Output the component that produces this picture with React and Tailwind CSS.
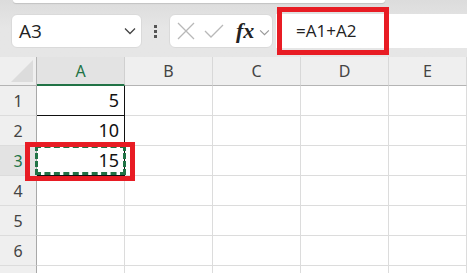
import React from 'react';

const cols = ['A', 'B', 'C', 'D', 'E'];
const rows = [1, 2, 3, 4, 5, 6, 7];
const values = { 1: '5', 2: '10', 3: '15' };

function Chevron({ className }) {
  return (
    <svg className={className} viewBox="0 0 12 8" fill="none">
      <path d="M1 1.5 6 6.5 11 1.5" stroke="currentColor" strokeWidth="1.3" />
    </svg>
  );
}

function Toolbar() {
  return (
    <div className="relative h-[57px] bg-gradient-to-b from-[#dcdcdc] via-[#e6e6e6] to-[#e6e6e6]">
      <div className="ml-[13px] h-[3px] w-[372px] rounded-b-md bg-white shadow-[0_1px_1px_rgba(0,0,0,0.12)]" />
      <div className="mt-[11px] flex h-[34px] items-stretch">
        <div className="ml-[11px] flex w-[131px] items-center justify-between rounded-md border border-[#dadada] bg-white pl-[7px] pr-[5px]">
          <span className="text-[19px] text-[#222] [font-family:'Open_Sans',sans-serif]">A3</span>
          <Chevron className="h-[8px] w-[12px] text-[#444]" />
        </div>
        <div className="flex w-[27px] flex-col items-center justify-center gap-[2px]">
          <span className="h-[3px] w-[3px] bg-[#555]" />
          <span className="h-[3px] w-[3px] bg-[#555]" />
          <span className="h-[3px] w-[3px] bg-[#555]" />
        </div>
        <div className="flex w-[104px] items-center rounded-md border border-[#dadada] bg-white pl-[7px]">
          <svg className="h-[18px] w-[18px]" viewBox="0 0 18 18" fill="none">
            <path d="M1 1 17 17M17 1 1 17" stroke="#b8b8b8" strokeWidth="1.3" />
          </svg>
          <svg className="ml-[9px] h-[16px] w-[20px]" viewBox="0 0 20 16" fill="none">
            <path d="M1 8 7 14 19 2" stroke="#b8b8b8" strokeWidth="1.3" />
          </svg>
          <span className="ml-[12px] text-[22px] font-semibold italic leading-none text-[#222] [font-family:'Liberation_Serif',serif]">fx</span>
          <Chevron className="ml-[5px] mt-[2px] h-[7px] w-[11px] text-[#999]" />
        </div>
        <div className="ml-[3px] flex flex-1 items-center bg-white pl-[20px]">
          <span className="text-[17px] text-[#222] [font-family:'Open_Sans',sans-serif]">=A1+A2</span>
        </div>
      </div>
      <div className="absolute left-[277px] top-[7px] h-[48px] w-[112px] border-[5px] border-[#e81c24]" />
    </div>
  );
}

function Sheet() {
  return (
    <div className="relative grid grid-cols-[37px_88px_88px_88px_88px_1fr] bg-white [font-family:'Noto_Sans',sans-serif]">
      <div className="flex h-[29px] items-end justify-end border-b border-r border-[#b4b4b4] bg-[#efefef] p-[3px]">
        <svg className="h-[22px] w-[22px]" viewBox="0 0 22 22">
          <path d="M22 0V22H0Z" fill="#dcdcdc" />
        </svg>
      </div>
      {cols.map((c) => (
        <div
          key={c}
          className={`flex h-[29px] items-center justify-center border-r text-[16px] ${
            c === 'A'
              ? 'border-b-2 border-r-[#d0d0d0] border-b-[#217346] bg-[#e3e3e3] text-[#217346]'
              : 'border-b border-r-[#d8d8d8] border-b-[#b4b4b4] bg-[#efefef] text-[#444]'
          }`}
        >
          {c}
        </div>
      ))}
      {rows.map((r) => (
        <React.Fragment key={r}>
          <div
            className={`flex h-[30px] items-center justify-center border-b border-r border-r-[#a8a8a8] border-b-[#dcdcdc] text-[16px] ${
              r === 3 ? 'bg-[#e3e3e3] text-[#217346]' : 'bg-[#efefef] text-[#444]'
            }`}
          >
            {r < 7 ? r : ''}
          </div>
          {cols.map((c) => {
            const boxed = c === 'A' && r <= 3;
            return (
              <div
                key={c}
                className={`flex h-[30px] items-center justify-end border-b border-r pr-[5px] text-[18px] text-[#111] ${
                  boxed ? 'border-b-[#111] border-r-[#111]' : 'border-b-[#dcdcdc] border-r-[#dcdcdc]'
                } ${r === 3 && c === 'A' ? 'relative' : ''}`}
              >
                {c === 'A' ? values[r] : ''}
                {r === 3 && c === 'A' && (
                  <div className="absolute -left-[2px] -top-[1px] h-[30px] w-[91px] border-[3px] border-dashed border-[#217346]" />
                )}
              </div>
            );
          })}
        </React.Fragment>
      ))}
      <div className="absolute left-[25px] top-[85px] h-[39px] w-[110px] border-[5px] border-[#e81c24]" />
    </div>
  );
}

export default function App() {
  return (
    <div className="h-[273px] w-[467px] overflow-hidden bg-[#efefef]">
      <Toolbar />
      <Sheet />
    </div>
  );
}
